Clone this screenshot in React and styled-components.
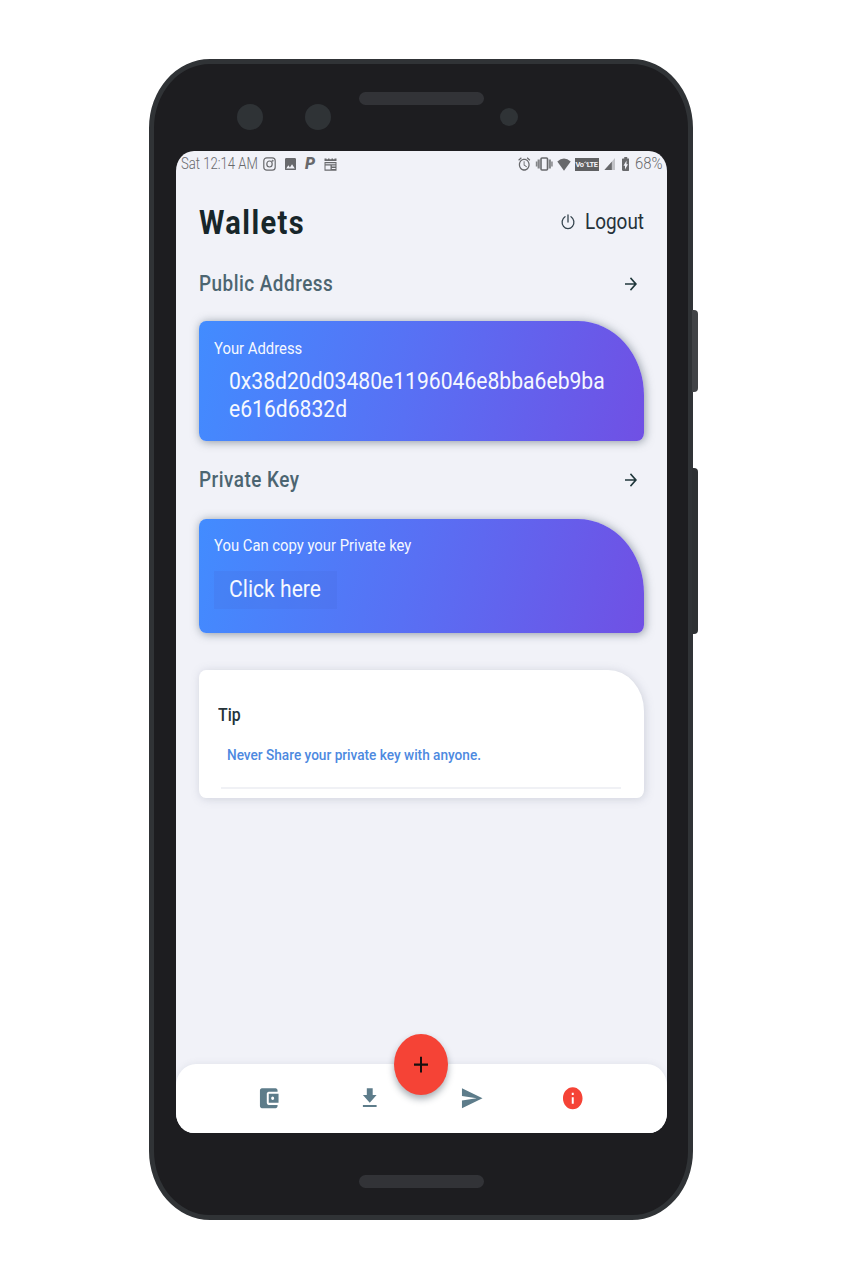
import React from 'react';
import styled, { createGlobalStyle } from 'styled-components';

const GlobalStyle = createGlobalStyle`
  * { box-sizing: border-box; }
  body { margin: 0; background: #fff; font-family: Roboto, "Liberation Sans", sans-serif; }
`;

const Page = styled.main`
  min-height: 1280px;
  padding: 59px 0 0 149px;
`;

const Phone = styled.div`
  position: relative;
  display: flex;
  flex-direction: column;
  width: 544px;
  height: 1161px;
  padding: 0 21.5px;
  background: #1d1d20;
  border: solid #303336;
  border-width: 5px;
  border-radius: 61px / 69px;
`;

const SideButton = styled.div`
  position: absolute;
  left: 538px;
  top: ${(p) => p.$top}px;
  width: 6px;
  height: ${(p) => p.$height}px;
  background: ${(p) => p.$color};
  border-radius: 0 4px 4px 0;
`;

const TopBezel = styled.div`
  display: flex;
  flex: none;
  height: 86.5px;
  padding: 27.5px 0 0 61.5px;
`;

const Lens = styled.div`
  width: ${(p) => p.$size}px;
  height: ${(p) => p.$size}px;
  margin: ${(p) => 25 - p.$size / 2}px ${(p) => p.$gap}px 0 0;
  border-radius: 50%;
  background: #2f3336;
`;

const Speaker = styled.div`
  width: 125px;
  height: 13px;
  margin-right: ${(p) => p.$gap || 0}px;
  border-radius: 6.5px;
  background: #323337;
`;

const BottomBezel = styled.div`
  display: flex;
  flex: 1;
  justify-content: center;
  padding-top: 42px;
`;

const Screen = styled.div`
  display: flex;
  flex: none;
  flex-direction: column;
  width: 491px;
  height: 982.9px;
  overflow: hidden;
  background: #f1f2f8;
  border-radius: 18px / 20px;
`;

const Label = styled.span`
  display: inline-block;
  flex: none;
  width: ${(p) => (p.$width ? `${p.$width}px` : 'auto')};
  font-size: ${(p) => p.$size}px;
  font-weight: ${(p) => p.$weight || 400};
  line-height: ${(p) => p.$line || 28}px;
  letter-spacing: ${(p) => p.$spacing || 0}px;
  color: ${(p) => p.$color};
  white-space: nowrap;
  transform: scaleX(${(p) => p.$stretch || 0.88});
  transform-origin: left center;
`;

const StatusBar = styled.div`
  display: flex;
  flex: none;
  align-items: center;
  justify-content: space-between;
  height: 27px;
  padding: 0 3.5px 0 5px;
  color: #68696c;
`;

const StatusGroup = styled.div`
  display: flex;
  align-items: center;
  gap: ${(p) => p.$gap}px;
`;

const Glyph = styled.svg`
  display: block;
  flex: none;
  width: ${(p) => p.$w}px;
  height: ${(p) => p.$h}px;
  margin-left: ${(p) => p.$before || 0}px;
  margin-right: ${(p) => p.$after || 0}px;
  fill: ${(p) => p.$fill || 'currentColor'};
`;

const BrandMark = styled.span`
  width: 11px;
  padding-left: 1px;
  font-size: 16px;
  font-weight: 900;
  font-style: italic;
  line-height: 14px;
`;

const VolteBadge = styled.span`
  display: flex;
  align-items: center;
  justify-content: center;
  width: 24px;
  height: 13px;
  margin-left: 4px;
  background: #606163;
  color: #f4f4f8;
  font-size: 7.5px;
  font-weight: 700;
  line-height: 13px;
  letter-spacing: -0.4px;
`;

const Content = styled.div`
  display: flex;
  flex-direction: column;
  padding: 0 23px;
`;

const Header = styled.header`
  display: flex;
  align-items: center;
  justify-content: space-between;
  height: 89px;
`;

const Title = styled.h1`
  display: flex;
  margin: 0;
  padding-top: 2px;
`;

const Logout = styled.div`
  display: flex;
  align-items: center;
  gap: 9.5px;
  color: #34434d;
`;

const SectionHead = styled.div`
  display: flex;
  align-items: center;
  justify-content: space-between;
  height: 34px;
  margin-top: ${(p) => p.$top}px;
  padding-right: 3.5px;
  color: #20373b;
`;

const KeyCard = styled.section`
  display: flex;
  flex-direction: column;
  height: ${(p) => p.$height}px;
  margin-top: ${(p) => p.$top}px;
  padding: 12.5px 15px 0;
  border-radius: 7px 66px 7px 7px / 8px 74px 8px 8px;
  background: linear-gradient(103deg, #428cff 0%, #5870f4 48%, #7050e4 100%);
  box-shadow: 1px 1px 10px rgba(75, 90, 105, 0.6);
`;

const AddressText = styled.div`
  display: flex;
  flex-direction: column;
  padding: 5px 0 0 15px;
`;

const CopyButton = styled.div`
  display: flex;
  align-items: center;
  width: 123px;
  height: 38px;
  margin-top: 12px;
  padding: 0 0 2px 15px;
  background: rgba(70, 105, 215, 0.2);
`;

const TipCard = styled.section`
  display: flex;
  flex-direction: column;
  height: 128.5px;
  margin-top: 36.5px;
  padding: 31.2px 19px 0;
  background: #fff;
  border-radius: 7px 36px 7px 7px / 8px 41px 8px 8px;
  box-shadow: 1px 1px 10px rgba(110, 115, 140, 0.26);
`;

const TipBody = styled.div`
  height: 48.3px;
  margin: 12px 3.5px 0;
  padding: 0 5.5px;
  border-bottom: 2px solid #f0f1f5;
`;

const NavBar = styled.nav`
  position: relative;
  display: flex;
  align-items: center;
  justify-content: space-between;
  height: 69.5px;
  margin-top: auto;
  padding: 0 82px 0 81px;
  background: #fff;
  color: #5d7c8a;
  border-radius: 20px 20px 0 0 / 22px 22px 0 0;
  box-shadow: 0 -1px 6px rgba(110, 115, 140, 0.1);
`;

const AddButton = styled.div`
  position: absolute;
  left: 218px;
  top: -30px;
  display: flex;
  align-items: center;
  justify-content: center;
  width: 54px;
  height: 61px;
  border-radius: 50%;
  background: #f54336;
  box-shadow: 0 4px 7px rgba(30, 45, 60, 0.38);
`;

function Icon({ d, w = 23.5, h = 26.5, fill }) {
  return (
    <Glyph viewBox="0 0 24 24" preserveAspectRatio="none" $w={w} $h={h} $fill={fill}>
      <path d={d} />
    </Glyph>
  );
}

const paths = {
  arrow: 'M12 4l-1.41 1.41L16.17 11H4v2h12.17l-5.58 5.59L12 20l8-8z',
  wallet:
    'M21 18v1c0 1.1-.9 2-2 2H5c-1.11 0-2-.9-2-2V5c0-1.1.89-2 2-2h14c1.1 0 2 .9 2 2v1h-9c-1.11 0-2 .9-2 2v8c0 1.1.89 2 2 2h9zm-9-2h10V8H12v8zm4-2.5c-.83 0-1.5-.67-1.5-1.5s.67-1.5 1.5-1.5 1.5.67 1.5 1.5-.67 1.5-1.5 1.5z',
  download: 'M19 9h-4V3H9v6H5l7 7 7-7zM5 18v2h14v-2H5z',
  send: 'M2.01 21L23 12 2.01 3 2 10l15 2-15 2z',
  info: 'M12 2C6.48 2 2 6.48 2 12s4.48 10 10 10 10-4.48 10-10S17.52 2 12 2zm1 15h-2v-6h2v6zm0-8h-2V7h2v2z',
  image:
    'M21 19V5c0-1.1-.9-2-2-2H5c-1.1 0-2 .9-2 2v14c0 1.1.9 2 2 2h14c1.1 0 2-.9 2-2zM8.5 13.5l2.5 3.01L14.5 12l4.5 6H5l3.5-4.5z',
  alarm:
    'M22 5.72l-4.6-3.86-1.29 1.53 4.6 3.86L22 5.72zM7.88 3.39L6.6 1.86 2 5.71l1.29 1.53 4.59-3.85zM12.5 8H11v6l4.75 2.85.75-1.23-4-2.37V8zM12 4c-4.97 0-9 4.03-9 9s4.02 9 9 9c4.97 0 9-4.03 9-9s-4.03-9-9-9zm0 16c-3.87 0-7-3.13-7-7s3.13-7 7-7 7 3.13 7 7-3.13 7-7 7z',
  battery:
    'M15.67 4H14V2h-4v2H8.33C7.6 4 7 4.6 7 5.33v15.33C7 21.4 7.6 22 8.33 22h7.33c.74 0 1.34-.6 1.34-1.33V5.33C17 4.6 16.4 4 15.67 4zM11 20v-5.500H9L13 7v5.500h2L11 20z',
};

function StatusIcons() {
  return (
    <StatusGroup $gap={0}>
      <Icon d={paths.alarm} w={14.5} h={16} />
      <Glyph viewBox="0 0 18 14" $w={18} $h={14} $before={3.5}>
        <rect x="6" y="1" width="6.500" height="12" rx="1" fill="none" stroke="currentColor" strokeWidth="1.6" />
        <path d="M2.600 2.500h2.200v9H2.600zM.8 4.500h1.500v5H.8zM13.700 2.500h2.200v9h-2.200zM16.200 4.500h1.500v5h-1.500z" opacity=".8" />
      </Glyph>
      <Glyph viewBox="0 0 14 13" $w={14} $h={13} $before={4}>
        <path d="M.3 3.500Q7-2.500 13.700 3.500L7 12.700z" />
      </Glyph>
      <VolteBadge>
        <span>Vo</span>
        <Glyph viewBox="0 0 4 8" $w={3} $h={8} $fill="none">
          <path d="M0 3L2 1 4 4" stroke="currentColor" />
        </Glyph>
        <span>LTE</span>
      </VolteBadge>
      <Glyph viewBox="0 0 12 12" preserveAspectRatio="none" $w={11} $h={12.5} $before={5}>
        <path d="M0 12L12 0V12z" opacity=".35" />
        <path d="M0 12L8.500 3.500V12z" />
      </Glyph>
      <Glyph viewBox="7 2 10 20" preserveAspectRatio="none" $w={7.5} $h={14} $before={7} $after={5.5}>
        <path d={paths.battery} />
      </Glyph>
      <Label $size={16} $weight={300} $width={28.5} $line={20} $stretch={0.93}>68%</Label>
    </StatusGroup>
  );
}

export default function App() {
  return (
    <>
      <GlobalStyle />
      <Page>
        <Phone>
          <SideButton $top={246} $height={82} $color="#414346" />
          <SideButton $top={404} $height={166} $color="#2e3133" />
          <TopBezel>
            <Lens $size={26} $gap={41.5} />
            <Lens $size={26} $gap={28.5} />
            <Speaker $gap={16} />
            <Lens $size={18} $gap={0} />
          </TopBezel>

          <Screen>
            <StatusBar>
              <StatusGroup $gap={8.5}>
                <Label $size={16} $weight={300} $width={74} $line={20} $stretch={0.82}>Sat 12:14 AM</Label>
                <Glyph viewBox="0 0 13 14" $w={13} $h={14} $fill="none" stroke="currentColor" strokeWidth="1.2">
                  <rect x=".8" y=".8" width="11.400" height="12.400" rx="3" />
                  <ellipse cx="6.500" cy="7" rx="2.700" ry="3" />
                  <circle cx="9.600" cy="3.700" r=".4" />
                </Glyph>
                <Glyph viewBox="3 3 18 18" preserveAspectRatio="none" $w={11} $h={12.5}>
                  <path d={paths.image} />
                </Glyph>
                <BrandMark>P</BrandMark>
                <Glyph viewBox="0 0 13 13" $w={13} $h={13}>
                  <path fillRule="evenodd" d="M.5.500h2v.8h1.500v-.8h1.500v.8h2v-.8h1.500v.8h1.500v-.8h2V3H.5zM.5 4h12v8.800H.5zM1.500 5.300v1h10v-1zM1.500 7.600v4h5v-4zM7.800 7.600v1h3.700v-1zM7.800 10v1h3.700v-1z" />
                </Glyph>
              </StatusGroup>
              <StatusIcons />
            </StatusBar>

            <Content>
              <Header>
                <Title>
                  <Label $size={33} $weight={700} $spacing={1.6} $color="#17262a">Wallets</Label>
                </Title>
                <Logout>
                  <Glyph viewBox="0 0 14 16" $w={14} $h={16} $fill="none" stroke="currentColor" strokeWidth="1.3" strokeLinecap="round">
                    <path d="M7 1v7M4 2.700A5.900 6.400 0 1 0 10 2.700" />
                  </Glyph>
                  <Label $size={21.5} $width={59} $color="#26323a">Logout</Label>
                </Logout>
              </Header>

              <SectionHead $top={0}>
                <Label $size={21.5} $weight={500} $spacing={0.55} $color="#4c6571">Public Address</Label>
                <Icon d={paths.arrow} w={18} h={20} />
              </SectionHead>
              <KeyCard $top={20.5} $height={119.5}>
                <Label $size={17} $stretch={0.872} $color="#f5f8ff">Your Address</Label>
                <AddressText>
                  <Label $size={24} $color="#f5f8ff">0x38d20d03480e1196046e8bba6eb9ba</Label>
                  <Label $size={24} $color="#f5f8ff">e616d6832d</Label>
                </AddressText>
              </KeyCard>

              <SectionHead $top={22.5}>
                <Label $size={21.5} $weight={500} $spacing={0.55} $color="#4c6571">Private Key</Label>
                <Icon d={paths.arrow} w={18} h={20} />
              </SectionHead>
              <KeyCard $top={21.5} $height={114.5}>
                <Label $size={17} $stretch={0.872} $color="#f5f8ff">You Can copy your Private key</Label>
                <CopyButton>
                  <Label $size={24} $color="#f5f8ff">Click here</Label>
                </CopyButton>
              </KeyCard>

              <TipCard>
                <Label $size={18} $weight={500} $color="#253339">Tip</Label>
                <TipBody>
                  <Label $size={15} $weight={500} $stretch={0.908} $color="#4d89df">Never Share your private key with anyone.</Label>
                </TipBody>
              </TipCard>
            </Content>

            <NavBar>
              <Icon d={paths.wallet} />
              <Icon d={paths.download} />
              <Icon d={paths.send} />
              <Icon d={paths.info} fill="#f54336" />
              <AddButton>
                <Icon d="M19 13h-6v6h-2v-6H5v-2h6V5h2v6h6v2z" w={24} h={27} fill="#17100f" />
              </AddButton>
            </NavBar>
          </Screen>

          <BottomBezel>
            <Speaker />
          </BottomBezel>
        </Phone>
      </Page>
    </>
  );
}
